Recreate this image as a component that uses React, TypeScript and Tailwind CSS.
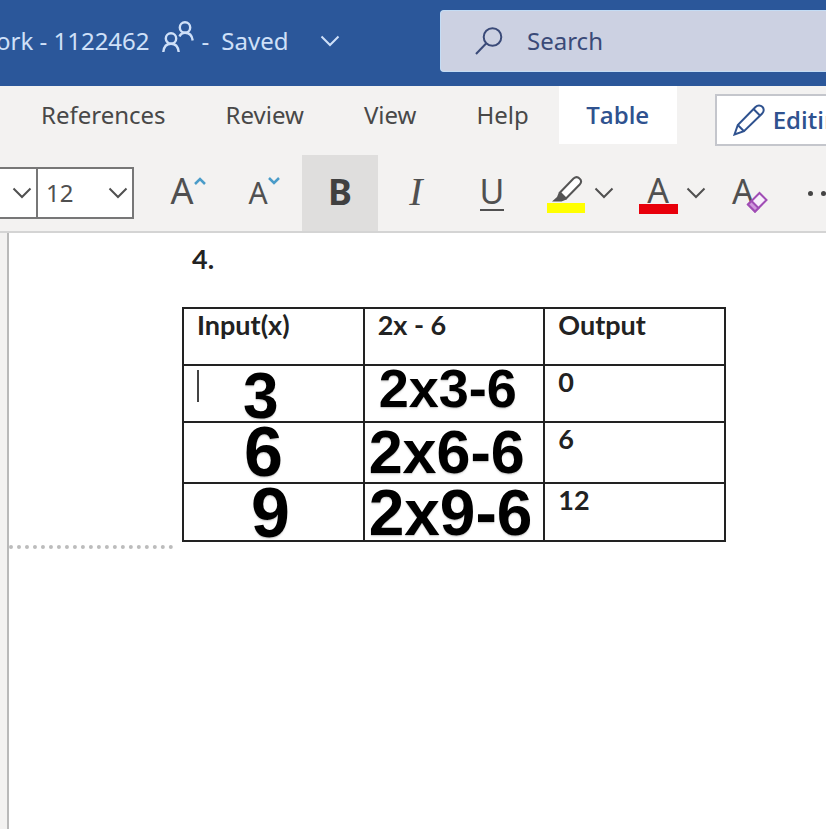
import React, { useState } from 'react';

const Chevron = ({ className = '' }: { className?: string }) => (
  <svg
    viewBox="0 0 20 12"
    className={`w-5 h-3 shrink-0 ${className}`}
    fill="none"
    stroke="currentColor"
    strokeWidth="2"
    aria-hidden="true"
  >
    <path d="M1.5 1.5 L10 10 L18.5 1.5" />
  </svg>
);

const PeopleIcon = () => (
  <svg viewBox="0 0 32 32" className="w-8 h-8 shrink-0" fill="none" stroke="currentColor" strokeWidth="2.4" aria-hidden="true">
    <circle cx="9" cy="17.5" r="5.2" />
    <path d="M1.3 31 C1.8 26 4.5 22.7 9 22.7 C13.5 22.7 16.2 26 16.7 31" />
    <circle cx="23" cy="6.5" r="5.2" />
    <path d="M17.5 15.5 C18.5 13 20.3 11.7 23 11.7 C27.5 11.7 30.2 15 30.700 19.5" />
  </svg>
);

const SearchIcon = () => (
  <svg viewBox="0 0 28 28" className="w-7 h-7 shrink-0" fill="none" stroke="currentColor" strokeWidth="2" aria-hidden="true">
    <circle cx="17.5" cy="10" r="8.8" />
    <path d="M11.3 16.3 L1 27" />
  </svg>
);

const PencilIcon = () => (
  <svg viewBox="0 0 32 32" className="w-8 h-8 shrink-0" fill="none" stroke="currentColor" strokeWidth="2" aria-hidden="true">
    <path d="M1.5 30.5 L4.8 21 L22.5 3 C24.5 1 27.500 1 29.3 2.8 C31.2 4.7 31.2 7.5 29.2 9.5 L11 27.2 Z" />
    <path d="M20.5 5 L27.2 11.700 M4.8 21 L11 27.2" />
  </svg>
);

const HighlighterIcon = () => (
  <svg viewBox="0 0 40 38" className="w-10 h-[38px]" aria-hidden="true">
    <rect x="1" y="27" width="38" height="10" fill="#ffff00" />
    <path
      d="M14 16.5 L27.5 2.500 C29.5 0.8 31.8 0.8 33.5 2.500 C35.500 4.300 35.500 6.500 33.7 8.5 L20 22.5 Z"
      fill="#fff"
      stroke="#555"
      strokeWidth="2"
    />
    <path d="M13 16 L20.500 23.5 L15.5 25.5 L6 25.5 L11 21 Z" fill="#555" />
  </svg>
);

const EraserIcon = () => (
  <svg viewBox="0 0 22 22" className="w-[22px] h-[22px]" fill="#f7eefb" stroke="#a04db5" strokeWidth="2" aria-hidden="true">
    <path d="M13.5 2 L20.5 9 L9 20.5 L2 13.5 Z" />
    <path d="M2 13.5 L5.5 10 L12.5 17 L9 20.5 Z" fill="#cf98dc" />
  </svg>
);

const tabs = ['References', 'Review', 'View', 'Help'];

const rows = [
  {
    input: '3',
    inputClass: 'pl-11 text-[64px] leading-[57px] pt-[2px]',
    work: '2x3-6',
    workClass: 'pl-[14px] text-[54px] leading-[44px]',
    output: '0',
    rowClass: 'h-[57px]',
  },
  {
    input: '6',
    inputClass: 'pl-[60px] text-[70px] leading-[58px]',
    work: '2x6-6',
    workClass: 'pl-1 text-[61px] leading-[58px]',
    output: '6',
    rowClass: 'h-[61px]',
  },
  {
    input: '9',
    inputClass: 'pl-[67px] text-[70px] leading-[58px]',
    work: '2x9-6',
    workClass: 'pl-1 text-[64px] leading-[58px]',
    output: '12',
    rowClass: 'h-[58px]',
  },
];

const TitleBar = () => (
  <header className="flex items-center h-[86px] pb-1 bg-[#2b579a] text-[#cfe0f8] whitespace-nowrap">
    <div className="flex items-center w-[440px] shrink-0 overflow-hidden">
      <span className="-ml-1">ork - 1122462</span>
      <span className="ml-3 mb-2">
        <PeopleIcon />
      </span>
      <span className="ml-2">-</span>
      <button type="button" className="flex items-center gap-8 ml-3">
        Saved
        <Chevron />
      </button>
    </div>
    <label className="flex flex-1 items-center gap-6 h-[62px] pl-[34px] rounded-l bg-[#ccd1e2] text-[#3a4a78] border border-r-0 border-[#c3dcf5] overflow-hidden">
      <SearchIcon />
      <input
        type="search"
        aria-label="Search"
        placeholder="Search"
        className="flex-1 min-w-0 bg-transparent outline-none placeholder:text-[#3a4a78]"
      />
    </label>
  </header>
);

const TabBar = () => (
  <nav className="flex h-[69px] items-start pl-[11px] whitespace-nowrap overflow-hidden">
    {tabs.map((tab) => (
      <button key={tab} type="button" className="h-[58px] px-[30px] shrink-0">
        {tab}
      </button>
    ))}
    <button type="button" className="h-[58px] w-[118px] shrink-0 bg-white font-['Open_Sans'] font-semibold text-[#2f528f]">
      Table
    </button>
    <button
      type="button"
      className="flex items-center gap-2 h-[52px] mt-2 ml-[38px] px-4 shrink-0 bg-white border-2 border-[#c4c6cc] font-['Open_Sans'] font-semibold text-[#2f528f]"
    >
      <PencilIcon />
      Editing
    </button>
  </nav>
);

const Toolbar = () => {
  const [bold, setBold] = useState(true);

  return (
    <div className="flex items-center h-[76px] text-[#505050] overflow-hidden">
      <div className="flex h-[52px] w-[134px] shrink-0 bg-white border-2 border-l-0 border-[#777]">
        <div className="grid w-[38px] items-center border-r-2 border-[#777]">
          <select aria-label="Font" className="appearance-none col-start-1 row-start-1 w-full h-full outline-none" />
          <Chevron className="col-start-1 row-start-1 justify-self-end mr-1 pointer-events-none" />
        </div>
        <div className="grid flex-1 items-center">
          <select
            aria-label="Font size"
            defaultValue="12"
            className="appearance-none col-start-1 row-start-1 w-full h-full pl-2 outline-none"
          >
            <option>11</option>
            <option>12</option>
            <option>14</option>
          </select>
          <Chevron className="col-start-1 row-start-1 justify-self-end mr-1 pointer-events-none" />
        </div>
      </div>

      <button type="button" aria-label="Grow font" className="flex items-start justify-center w-[76px] h-full ml-4 pt-[18px] shrink-0">
        <span className="text-[36px] leading-9">A</span>
        <svg viewBox="0 0 12 8" className="w-3 h-2 mt-1" fill="none" stroke="#4a9cc9" strokeWidth="2.5">
          <path d="M1 7 L6 2 L11 7" />
        </svg>
      </button>
      <button type="button" aria-label="Shrink font" className="flex items-start justify-center w-[76px] h-full pt-[18px] shrink-0">
        <span className="text-[30px] leading-10">A</span>
        <svg viewBox="0 0 12 8" className="w-3 h-2 mt-1" fill="none" stroke="#4a9cc9" strokeWidth="2.5">
          <path d="M1 1 L6 6 L11 1" />
        </svg>
      </button>
      <button
        type="button"
        aria-label="Bold"
        aria-pressed={bold}
        onClick={() => setBold(!bold)}
        className={`w-[76px] h-full pb-[2px] shrink-0 text-[36px] leading-9 font-bold text-[#404040] ${bold ? 'bg-[#dfdedd]' : ''}`}
      >
        B
      </button>
      <button
        type="button"
        aria-label="Italic"
        className="w-[76px] h-full pb-[2px] shrink-0 font-['Liberation_Serif'] italic text-[40px] leading-9"
      >
        I
      </button>
      <button type="button" aria-label="Underline" className="flex flex-col items-center w-[76px] h-full pt-[18px] shrink-0">
        <span className="text-[34px] leading-9">U</span>
        <span className="w-6 border-b-2 border-[#505050]" />
      </button>

      <button type="button" aria-label="Highlight colour" className="ml-4 mt-1 shrink-0">
        <HighlighterIcon />
      </button>
      <button type="button" aria-label="More highlight colours" className="ml-2 shrink-0">
        <Chevron />
      </button>
      <button type="button" aria-label="Font colour" className="flex flex-col items-center w-10 ml-6 mt-1 shrink-0">
        <span className="text-[34px] leading-7">A</span>
        <span className="w-[39px] h-[10px] bg-[#e8000b]" />
      </button>
      <button type="button" aria-label="More font colours" className="ml-2 shrink-0">
        <Chevron />
      </button>
      <button type="button" aria-label="Clear formatting" className="flex items-end ml-[26px] pb-1 shrink-0">
        <span className="text-[34px] leading-9">A</span>
        <span className="-ml-2 -mb-1">
          <EraserIcon />
        </span>
      </button>
      <button type="button" aria-label="More options" className="flex gap-2 ml-10 shrink-0">
        <span className="w-[5px] h-[5px] rounded-full bg-[#444]" />
        <span className="w-[5px] h-[5px] rounded-full bg-[#444]" />
        <span className="w-[5px] h-[5px] rounded-full bg-[#444]" />
      </button>
    </div>
  );
};

const Worksheet = () => (
  <main className="flex-1 ml-[7px] pt-2 bg-white border-l-2 border-[#b9b9b9] font-['Lato'] font-bold text-[#222]">
    <p className="pl-[183px] text-[27px] leading-9">4.</p>
    <table className="w-[544px] ml-[173px] mt-[30px] table-fixed border-collapse text-[27px] leading-8 text-left">
      <thead>
        <tr className="h-[57px] align-top">
          <th className="border-2 border-[#222] pl-[13px]">Input(x)</th>
          <th className="border-2 border-[#222] pl-[13px]">2x - 6</th>
          <th className="border-2 border-[#222] pl-[13px]">Output</th>
        </tr>
      </thead>
      <tbody>
        {rows.map((row) => (
          <tr key={row.input} className={`align-top ${row.rowClass}`}>
            <td className="border-2 border-[#222] p-0">
              <div className="flex h-[55px]">
                {row.input === '3' && <span className="w-[2px] h-8 mt-1 ml-[13px] bg-[#444]" />}
                <span className={`font-['Liberation_Sans'] text-black text-shadow-sm ${row.inputClass}`}>{row.input}</span>
              </div>
            </td>
            <td className="border-2 border-[#222] p-0">
              <div className={`h-[55px] font-['Liberation_Sans'] text-black whitespace-nowrap text-shadow-sm ${row.workClass}`}>
                {row.work}
              </div>
            </td>
            <td className="border-2 border-[#222] pl-[13px]">{row.output}</td>
          </tr>
        ))}
      </tbody>
    </table>
    <hr className="w-[164px] mt-[3px] border-0 border-t-4 border-dotted border-[#bcbcbc]" />
  </main>
);

const App: React.FC = () => (
  <div className="flex flex-col min-h-screen overflow-hidden bg-[#f3f2f1] font-['Noto_Sans'] text-[24px] leading-8 text-[#484848]">
    <TitleBar />
    <TabBar />
    <Toolbar />
    <div className="flex flex-col flex-1 border-t-2 border-[#d4d4d4]">
      <Worksheet />
    </div>
  </div>
);

export default App;
